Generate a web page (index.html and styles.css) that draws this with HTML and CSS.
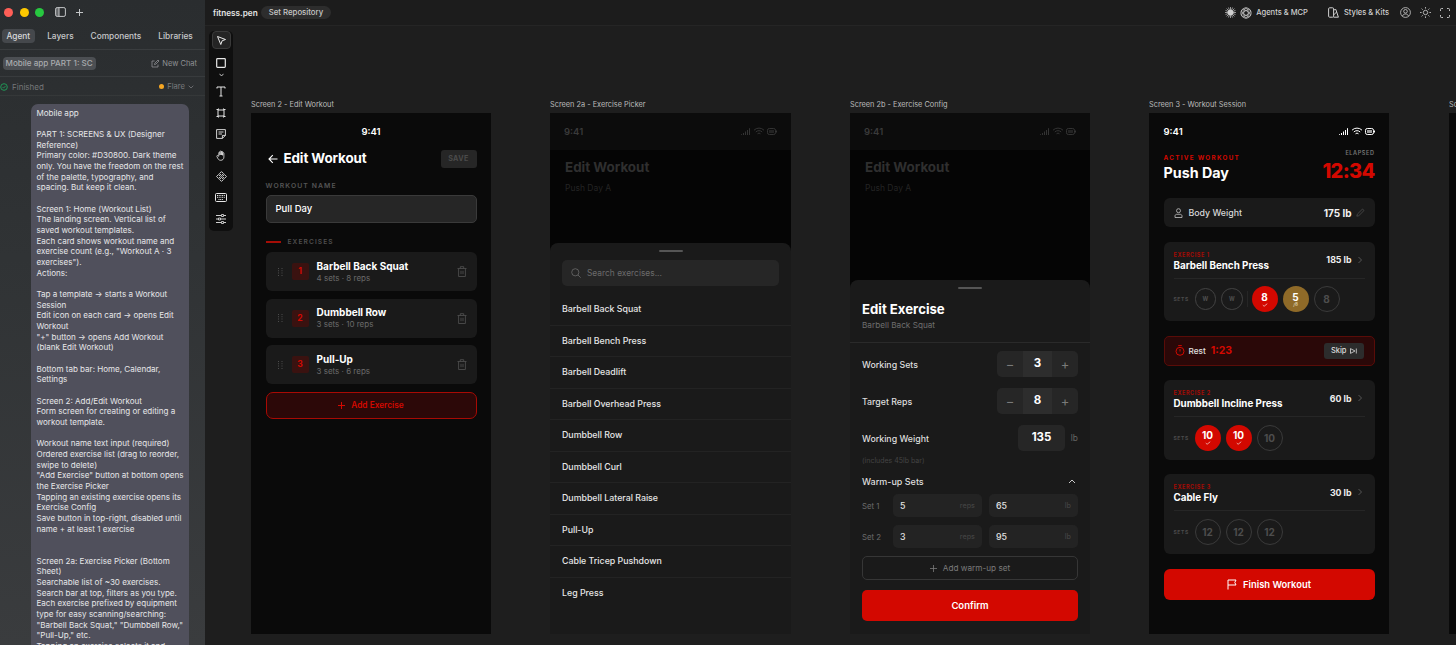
FILE: index.html
```html
<!DOCTYPE html>
<html lang="en">
<head>
<meta charset="utf-8">
<title>fitness.pen</title>
<link rel="stylesheet" href="styles.css">
</head>
<body>
<svg class="defs" width="0" height="0" aria-hidden="true">
  <symbol id="status" viewBox="0 0 36 9">
    <path d="M.5 8V7.200M2.500 8V6M4.500 8V4.500M6.500 8V3M8.500 8V1.200" fill="none" stroke="currentColor" stroke-width="1"/>
    <path d="M13 3.200a7 7 0 0 1 10 0M14.800 5a4.500 4.500 0 0 1 6.400 0M16.500 6.800a2.100 2.100 0 0 1 3 0" fill="none" stroke="currentColor" stroke-width="1"/>
    <rect x="26.500" y="1.500" width="8" height="6" rx="1.800" fill="none" stroke="currentColor"/>
    <rect x="28" y="3" width="5" height="3" fill="currentColor" opacity=".6"/>
    <rect x="35" y="3.500" width="1" height="2" fill="currentColor"/>
  </symbol>
  <symbol id="trash" viewBox="0 0 10 11">
    <path d="M.5 2.500h9M3.300 2.500V.7h3.400v1.800M1.600 2.500v8h6.800v-8M4 4.800v3.400M6 4.800v3.400" fill="none" stroke="currentColor" stroke-width=".9"/>
  </symbol>
  <symbol id="grip" viewBox="0 0 5 8">
    <path d="M0 0h1v1H0zM3.500 0h1v1h-1zM0 2.300h1v1H0zM3.500 2.300h1v1h-1zM0 4.600h1v1H0zM3.500 4.600h1v1h-1zM0 6.900h1v1H0zM3.500 6.900h1v1h-1z" fill="currentColor"/>
  </symbol>
  <symbol id="chev" viewBox="0 0 6 8">
    <path d="M1.500 1l3 3-3 3" fill="none" stroke="currentColor"/>
  </symbol>
  <symbol id="tick" viewBox="0 0 8 5">
    <path d="M1 2.600l1.800 1.600L7 .8" fill="none" stroke="currentColor" stroke-width=".8"/>
  </symbol>
</svg>

<aside class="sidebar">
  <div class="traffic">
    <span class="dot dot-red"></span><span class="dot dot-yellow"></span><span class="dot dot-green"></span>
    <svg class="panel-ico" width="11" height="10" viewBox="0 0 11 10"><rect x=".6" y=".6" width="9.800" height="8.800" rx="1.500" fill="none" stroke="currentColor"/><path d="M4 .6v8.800" stroke="currentColor"/><rect x="1" y="1" width="3" height="8" fill="currentColor" opacity=".4"/></svg>
    <svg class="plus-ico" width="9" height="9" viewBox="0 0 9 9"><path d="M4.500 1v7M1 4.500h7" stroke="currentColor"/></svg>
  </div>
  <nav class="tabs">
    <span class="tab tab-on">Agent</span><span class="tab">Layers</span><span class="tab">Components</span><span class="tab">Libraries</span>
  </nav>
  <div class="chat-row">
    <span class="chat-title">Mobile app PART 1: SC</span>
    <span class="new-chat">
      <svg width="9" height="9" viewBox="0 0 9 9"><path d="M7 5.500V8H1V2h2.600M3.500 5.600l.3-1.400L7 1l1 1-3.200 3.200z" fill="none" stroke="currentColor" stroke-width=".8"/></svg>
      New Chat
    </span>
  </div>
  <div class="status-row">
    <span class="finished">
      <svg width="8" height="8" viewBox="0 0 8 8"><circle cx="4" cy="4" r="3.300" fill="none" stroke="#1fa35a" stroke-width=".9"/><path d="M2.500 4l1.100 1.100 2-2.200" fill="none" stroke="#1fa35a" stroke-width=".8"/></svg>
      Finished
    </span>
    <span class="flare"><i class="flare-dot"></i>Flare
      <svg width="6" height="4" viewBox="0 0 6 4"><path d="M.7.700L3 3 5.300.700" fill="none" stroke="currentColor" stroke-width=".8"/></svg>
    </span>
  </div>
  <div class="thread">
    <p class="bubble">Mobile app

PART 1: SCREENS &amp; UX (Designer
Reference)
Primary color: #D30800. Dark theme
only. You have the freedom on the rest
of the palette, typography, and
spacing. But keep it clean.

Screen 1: Home (Workout List)
The landing screen. Vertical list of
saved workout templates.
Each card shows workout name and
exercise count (e.g., "Workout A · 3
exercises").
Actions:

Tap a template → starts a Workout
Session
Edit icon on each card → opens Edit
Workout
"+" button → opens Add Workout
(blank Edit Workout)

Bottom tab bar: Home, Calendar,
Settings

Screen 2: Add/Edit Workout
Form screen for creating or editing a
workout template.

Workout name text input (required)
Ordered exercise list (drag to reorder,
swipe to delete)
"Add Exercise" button at bottom opens
the Exercise Picker
Tapping an existing exercise opens its
Exercise Config
Save button in top-right, disabled until
name + at least 1 exercise


Screen 2a: Exercise Picker (Bottom
Sheet)
Searchable list of ~30 exercises.
Search bar at top, filters as you type.
Each exercise prefixed by equipment
type for easy scanning/searching:
"Barbell Back Squat," "Dumbbell Row,"
"Pull-Up," etc.
Tapping an exercise selects it and</p>
  </div>
</aside>

<div class="main">
  <header class="topbar">
    <span class="file">fitness.pen</span>
    <span class="repo">Set Repository</span>
    <span class="top-right">
      <svg class="t-ico" width="11" height="11" viewBox="0 0 11 11"><path d="M5.500 0v11M0 5.500h11M1.600 1.600l7.800 7.800M9.400 1.600L1.600 9.400M3.400.5l4.200 10M7.600.5l-4.200 10M.5 3.400l10 4.200M.5 7.600l10-4.200" stroke="currentColor" stroke-width=".7"/><circle cx="5.500" cy="5.500" r="2.800" fill="currentColor"/></svg>
      <svg class="t-ico" width="12" height="12" viewBox="0 0 12 12"><g fill="none" stroke="currentColor" stroke-width=".7"><circle cx="6" cy="6" r="5.200"/><ellipse cx="6" cy="6" rx="5" ry="2.200" transform="rotate(30 6 6)"/><ellipse cx="6" cy="6" rx="5" ry="2.200" transform="rotate(90 6 6)"/><ellipse cx="6" cy="6" rx="5" ry="2.200" transform="rotate(150 6 6)"/></g></svg>
      <span class="t-text t-agents">Agents &amp; MCP</span>
      <svg class="t-ico t-kits" width="11" height="11" viewBox="0 0 11 11"><g fill="none" stroke="currentColor"><rect x=".6" y=".8" width="5" height="9.400" rx="1"/><path d="M5.600 3l2.200-.6 2.600 7.800H5.600M5.600 8l3-3"/></g></svg>
      <span class="t-text t-styles">Styles &amp; Kits</span>
      <svg class="t-ico t-user" width="11" height="11" viewBox="0 0 11 11"><g fill="none" stroke="currentColor" stroke-width=".8"><circle cx="5.500" cy="5.500" r="4.900"/><circle cx="5.500" cy="4.300" r="1.800"/><path d="M2.400 9.200c.6-1.500 1.700-2.200 3.100-2.200s2.500.7 3.100 2.200"/></g></svg>
      <svg class="t-ico t-sun" width="11" height="11" viewBox="0 0 11 11"><g fill="none" stroke="currentColor" stroke-width=".8"><circle cx="5.500" cy="5.500" r="2.200"/><path d="M5.500 0v1.600M5.500 9.400V11M0 5.500h1.600M9.400 5.500H11M1.600 1.600l1.100 1.100M8.300 8.300l1.100 1.100M9.400 1.600L8.300 2.700M2.700 8.300L1.600 9.400"/></g></svg>
      <svg class="t-ico t-full" width="10" height="10" viewBox="0 0 10 10"><path d="M.5 3V1.500a1 1 0 0 1 1-1H3M7 .5h1.500a1 1 0 0 1 1 1V3M9.500 7v1.500a1 1 0 0 1-1 1H7M3 9.500H1.500a1 1 0 0 1-1-1V7" fill="none" stroke="currentColor" stroke-width=".9"/></svg>
    </span>
  </header>

  <main class="canvas">
    <div class="toolbar">
      <span class="tool tool-on"><svg width="11" height="11" viewBox="0 0 11 11"><path d="M1.500 1.500l8 3-3.400 1.300-1.300 3.700z" fill="none" stroke="currentColor"/></svg></span>
      <span class="tool"><svg width="10" height="10" viewBox="0 0 10 10"><rect x=".7" y=".7" width="8.600" height="8.600" rx=".8" fill="none" stroke="currentColor" stroke-width="1.200"/></svg></span>
      <span class="tool tool-chev"><svg width="5" height="4" viewBox="0 0 5 4"><path d="M.5.800L2.500 3 4.500.8" fill="none" stroke="currentColor" stroke-width=".8"/></svg></span>
      <span class="tool"><svg width="10" height="11" viewBox="0 0 10 11"><path d="M1 2.500V1h8v1.500M5 1v9M3.500 10h3" fill="none" stroke="currentColor"/></svg></span>
      <span class="tool"><svg width="10" height="10" viewBox="0 0 10 10"><path d="M2 2h6v6H2z" fill="none" stroke="currentColor"/><path d="M.5 1.500h2v-1M9.500 1.500h-2v-1M.5 8.500h2v1M9.500 8.500h-2v1" fill="none" stroke="currentColor"/></svg></span>
      <span class="tool"><svg width="10" height="10" viewBox="0 0 10 10"><path d="M.6.600h8.800v5.800L6.400 9.400H.6zM2.500 3h5M2.500 5h3.500M6.400 9.400V6.400h3" fill="none" stroke="currentColor" stroke-width=".9"/></svg></span>
      <span class="tool"><svg width="11" height="11" viewBox="0 0 11 11"><path d="M2.800 6.300V2.800c0-.9 1.200-.9 1.200 0V5 1.700c0-.9 1.300-.9 1.300 0V5 2c0-.9 1.300-.9 1.300 0v3.300-2c0-.9 1.300-.9 1.300 0v3.800c0 1.900-1.300 3.200-3.100 3.200-1.600 0-2.400-.8-3-1.900L.9 6.500c-.4-.9.700-1.400 1.200-.7z" fill="none" stroke="currentColor" stroke-width=".8"/></svg></span>
      <span class="tool"><svg width="11" height="11" viewBox="0 0 11 11"><path d="M5.500.6l2 2-2 2-2-2zM5.500 6.400l2 2-2 2-2-2zM2.600 3.500l2 2-2 2-2-2zM8.400 3.500l2 2-2 2-2-2z" fill="none" stroke="currentColor" stroke-width=".9"/></svg></span>
      <span class="tool"><svg width="12" height="9" viewBox="0 0 12 9"><rect x=".5" y=".5" width="11" height="8" rx="1" fill="none" stroke="currentColor"/><path d="M2 2.500h8M2 4.300h8M3.500 6.500h5" stroke="currentColor" stroke-dasharray="1 .7"/></svg></span>
      <span class="tool"><svg width="10" height="10" viewBox="0 0 10 10"><path d="M0 1.500h5M8 1.500h2M0 5h2M5 5h5M0 8.500h5M8 8.500h2" fill="none" stroke="currentColor" stroke-width=".9"/><path d="M5.500.5h2v2h-2zM2.500 4h2v2h-2zM5.500 7.500h2v2h-2z" fill="none" stroke="currentColor" stroke-width=".8"/></svg></span>
    </div>

    <!-- Screen 2 -->
    <section class="frame-wrap at-edit">
      <h2 class="frame-label">Screen 2 - Edit Workout</h2>
      <div class="frame edit">
        <div class="status-center">9:41</div>
        <div class="edit-head">
          <svg class="back" width="10" height="10" viewBox="0 0 10 10"><path d="M9.500 5H1M4.800 1.200L1 5l3.800 3.800" fill="none" stroke="#fff" stroke-width="1.100"/></svg>
          <h3 class="edit-title">Edit Workout</h3>
          <span class="save">SAVE</span>
        </div>
        <div class="field-label">WORKOUT NAME</div>
        <div class="name-input">Pull Day</div>
        <div class="section-label"><i class="section-rule"></i>EXERCISES</div>
        <div class="ex-list">
          <article class="ex-card">
            <svg class="grip"><use href="#grip"/></svg>
            <span class="ex-num">1</span>
            <div class="ex-info"><b class="ex-name">Barbell Back Squat</b><span class="ex-meta">4 sets · 8 reps</span></div>
            <svg class="trash"><use href="#trash"/></svg>
          </article>
          <article class="ex-card">
            <svg class="grip"><use href="#grip"/></svg>
            <span class="ex-num">2</span>
            <div class="ex-info"><b class="ex-name">Dumbbell Row</b><span class="ex-meta">3 sets · 10 reps</span></div>
            <svg class="trash"><use href="#trash"/></svg>
          </article>
          <article class="ex-card">
            <svg class="grip"><use href="#grip"/></svg>
            <span class="ex-num">3</span>
            <div class="ex-info"><b class="ex-name">Pull-Up</b><span class="ex-meta">3 sets · 6 reps</span></div>
            <svg class="trash"><use href="#trash"/></svg>
          </article>
        </div>
        <div class="add-ex"><svg width="7" height="7" viewBox="0 0 7 7"><path d="M3.500 0v7M0 3.500h7" stroke="currentColor"/></svg>Add Exercise</div>
      </div>
    </section>

    <!-- Screen 2a -->
    <section class="frame-wrap at-picker">
      <h2 class="frame-label">Screen 2a - Exercise Picker</h2>
      <div class="frame dimmed">
        <div class="dim-status"><span>9:41</span><svg class="st-ico"><use href="#status"/></svg></div>
        <div class="dim-body"><h3 class="dim-title">Edit Workout</h3><p class="dim-sub">Push Day A</p></div>
        <div class="sheet sheet-picker">
          <i class="handle"></i>
          <div class="search">
            <svg width="10" height="10" viewBox="0 0 10 10"><circle cx="4.300" cy="4.300" r="3.600" fill="none" stroke="currentColor" stroke-width=".8"/><path d="M7 7l2.700 2.700" stroke="currentColor" stroke-width=".8"/></svg>
            Search exercises...
          </div>
          <ul class="pick-list">
            <li class="pick">Barbell Back Squat</li>
            <li class="pick">Barbell Bench Press</li>
            <li class="pick">Barbell Deadlift</li>
            <li class="pick">Barbell Overhead Press</li>
            <li class="pick">Dumbbell Row</li>
            <li class="pick">Dumbbell Curl</li>
            <li class="pick">Dumbbell Lateral Raise</li>
            <li class="pick">Pull-Up</li>
            <li class="pick">Cable Tricep Pushdown</li>
            <li class="pick">Leg Press</li>
          </ul>
        </div>
      </div>
    </section>

    <!-- Screen 2b -->
    <section class="frame-wrap at-config">
      <h2 class="frame-label">Screen 2b - Exercise Config</h2>
      <div class="frame dimmed">
        <div class="dim-status"><span>9:41</span><svg class="st-ico"><use href="#status"/></svg></div>
        <div class="dim-body"><h3 class="dim-title">Edit Workout</h3><p class="dim-sub">Push Day A</p></div>
        <div class="sheet sheet-config">
          <i class="handle"></i>
          <div class="cfg-head"><h3 class="cfg-title">Edit Exercise</h3><p class="cfg-sub">Barbell Back Squat</p></div>
          <div class="cfg-body">
            <div class="cfg-row">
              <span class="cfg-label">Working Sets</span>
              <div class="stepper"><span class="step-btn">−</span><span class="step-val">3</span><span class="step-btn">+</span></div>
            </div>
            <div class="cfg-row">
              <span class="cfg-label">Target Reps</span>
              <div class="stepper"><span class="step-btn">−</span><span class="step-val">8</span><span class="step-btn">+</span></div>
            </div>
            <div class="cfg-row">
              <span class="cfg-label">Working Weight</span>
              <div class="weight"><span class="weight-val">135</span><span class="weight-unit">lb</span></div>
            </div>
            <p class="cfg-note">(includes 45lb bar)</p>
            <div class="warm-head"><span>Warm-up Sets</span><svg width="8" height="5" viewBox="0 0 8 5"><path d="M1 4l3-3 3 3" fill="none" stroke="currentColor" stroke-width=".9"/></svg></div>
            <div class="warm-row">
              <span class="warm-label">Set 1</span>
              <div class="warm-input"><span>5</span><em>reps</em></div>
              <div class="warm-input"><span>65</span><em>lb</em></div>
            </div>
            <div class="warm-row">
              <span class="warm-label">Set 2</span>
              <div class="warm-input"><span>3</span><em>reps</em></div>
              <div class="warm-input"><span>95</span><em>lb</em></div>
            </div>
            <div class="add-warm"><svg width="7" height="7" viewBox="0 0 7 7"><path d="M3.500 0v7M0 3.500h7" stroke="currentColor" stroke-width=".8"/></svg>Add warm-up set</div>
            <div class="confirm">Confirm</div>
          </div>
        </div>
      </div>
    </section>

    <!-- Screen 3 -->
    <section class="frame-wrap at-session">
      <h2 class="frame-label">Screen 3 - Workout Session</h2>
      <div class="frame session">
        <div class="sess-status"><span>9:41</span><svg class="st-ico"><use href="#status"/></svg></div>
        <div class="sess-head">
          <div class="sess-left"><span class="active-label">ACTIVE WORKOUT</span><h3 class="sess-title">Push Day</h3></div>
          <div class="sess-right"><span class="elapsed-label">ELAPSED</span><span class="elapsed">12:34</span></div>
        </div>
        <div class="body-weight">
          <svg width="9" height="10" viewBox="0 0 9 10"><g fill="none" stroke="currentColor" stroke-width=".8"><circle cx="4.500" cy="2.700" r="2"/><path d="M1 9.500V8c0-1 .8-1.700 1.700-1.700h3.600C7.200 6.300 8 7 8 8v1.500z"/></g></svg>
          <span class="bw-label">Body Weight</span>
          <b class="bw-val">175 lb</b>
          <svg class="bw-pen" width="9" height="9" viewBox="0 0 9 9"><path d="M.8 8.200l.5-2L6.500 1 8 2.500 2.800 7.700z" fill="none" stroke="currentColor" stroke-width=".7"/></svg>
        </div>
        <article class="s-card">
          <div class="s-top">
            <div class="s-names"><span class="s-kicker">EXERCISE 1</span><b class="s-name">Barbell Bench Press</b></div>
            <b class="s-weight">185 lb</b><svg class="s-chev"><use href="#chev"/></svg>
          </div>
          <div class="s-sets">
            <span class="sets-label">SETS</span>
            <span class="set set-w">W</span><span class="set set-w">W</span><i class="set-sep"></i>
            <span class="set set-done">8<svg class="tick"><use href="#tick"/></svg></span>
            <span class="set set-part">5<small>/8</small></span>
            <span class="set set-todo">8</span>
          </div>
        </article>
        <div class="rest">
          <svg class="rest-ico" width="10" height="11" viewBox="0 0 10 11"><g fill="none" stroke="currentColor"><circle cx="5" cy="6.300" r="4"/><path d="M3.200.6h3.600M5 4v2.500"/></g></svg>
          <span class="rest-label">Rest</span>
          <b class="rest-time">1:23</b>
          <span class="skip">Skip <svg width="7" height="6" viewBox="0 0 7 6"><path d="M.5.600L5 3 .5 5.400zM6.300.5v5" fill="none" stroke="currentColor" stroke-width=".8"/></svg></span>
        </div>
        <article class="s-card">
          <div class="s-top">
            <div class="s-names"><span class="s-kicker">EXERCISE 2</span><b class="s-name">Dumbbell Incline Press</b></div>
            <b class="s-weight">60 lb</b><svg class="s-chev"><use href="#chev"/></svg>
          </div>
          <div class="s-sets">
            <span class="sets-label">SETS</span>
            <span class="set set-done">10<svg class="tick"><use href="#tick"/></svg></span>
            <span class="set set-done">10<svg class="tick"><use href="#tick"/></svg></span>
            <span class="set set-todo">10</span>
          </div>
        </article>
        <article class="s-card">
          <div class="s-top">
            <div class="s-names"><span class="s-kicker">EXERCISE 3</span><b class="s-name">Cable Fly</b></div>
            <b class="s-weight">30 lb</b><svg class="s-chev"><use href="#chev"/></svg>
          </div>
          <div class="s-sets">
            <span class="sets-label">SETS</span>
            <span class="set set-todo">12</span><span class="set set-todo">12</span><span class="set set-todo">12</span>
          </div>
        </article>
        <div class="finish"><svg width="10" height="11" viewBox="0 0 10 11"><path d="M1 10.500V1h8L7.800 3.500 9 6H1" fill="none" stroke="currentColor"/></svg>Finish Workout</div>
      </div>
    </section>

    <section class="frame-wrap at-next">
      <h2 class="frame-label">Screen 4</h2>
      <div class="frame"></div>
    </section>
  </main>
</div>
</body>
</html>
```

FILE: styles.css
```css
* { box-sizing: border-box; margin: 0; padding: 0; }
html, body { height: 100%; }
body {
  display: flex;
  width: 1456px;
  height: 645px;
  overflow: hidden;
  background: #1e1e1e;
  color: #fff;
  font-family: Inter, "Liberation Sans", sans-serif;
}
.defs { position: absolute; }
h2, h3 { font-weight: inherit; font-size: inherit; }
ul { list-style: none; }
em { font-style: normal; }

/* sidebar */
.sidebar {
  width: 205px;
  flex: none;
  display: flex;
  flex-direction: column;
  background: linear-gradient(180deg, #2a2d2f 0%, #303335 40%, #3a3c3e 100%);
  color: #cfd0d2;
  overflow: hidden;
}
.traffic { height: 24px; display: flex; align-items: center; padding-left: 4px; flex: none; }
.dot { width: 9px; height: 9px; border-radius: 50%; margin-right: 6.500px; }
.dot-red { background: #ff5f57; }
.dot-yellow { background: #fdc800; }
.dot-green { background: #27c840; }
.panel-ico { color: #c4c6c8; margin-left: 4px; }
.plus-ico { color: #c4c6c8; margin-left: 9px; }
.tabs {
  height: 26px;
  flex: none;
  display: flex;
  align-items: flex-start;
  padding: 5px 0 0 2px;
  border-bottom: 1px solid #3a3d3f;
  font-size: 8.300px;
  font-weight: 500;
  color: #c8c9cb;
}
.tab { height: 14px; line-height: 14px; padding: 0 4.500px; margin-right: 8px; }
.tab-on { background: #45484c; border-radius: 4px; color: #d8d9db; }
.chat-row {
  height: 27px;
  flex: none;
  display: flex;
  align-items: center;
  justify-content: space-between;
  padding: 1px 8px 0 3px;
  border-bottom: 1px solid #383b3d;
}
.chat-title {
  width: 93px;
  height: 13px;
  line-height: 13px;
  padding-left: 2.500px;
  background: #4c4f53;
  border-radius: 4px;
  color: #a9abae;
  overflow: hidden;
  white-space: nowrap;
  font-size: 8.100px;
  font-weight: 500;
}
.new-chat { display: flex; align-items: center; gap: 2px; color: #8f9194; font-size: 7.500px; }
.status-row {
  height: 19px;
  flex: none;
  display: flex;
  align-items: center;
  justify-content: space-between;
  padding: 1px 11px 0 0;
  border-bottom: 1px solid #353839;
  font-size: 7.600px;
  color: #75787a;
}
.finished { display: flex; align-items: center; gap: 4px; font-size: 8px; }
.flare { display: flex; align-items: center; gap: 3px; color: #787a7d; }
.flare-dot { width: 5.500px; height: 5.500px; border-radius: 50%; background: #f5a623; }
.thread { padding: 8px 16px 0 31px; flex: 1; min-height: 0; }
.bubble {
  background: #50505c;
  border-radius: 7px;
  padding: 3.500px 5px 30px 5.500px;
  font-size: 8.050px;
  line-height: 10.667px;
  white-space: pre;
  color: #e6e6e8;
}

/* top bar */
.main { flex: 1; min-width: 0; display: flex; flex-direction: column; }
.topbar {
  height: 26px;
  flex: none;
  display: flex;
  align-items: center;
  padding: 0 6px 0 8px;
  background: #1c1c1c;
  border-bottom: 1px solid #252525;
  font-size: 8.200px;
  font-weight: 500;
  color: #dcdcdc;
}
.file { font-weight: 600; color: #e4e4e4; }
.repo {
  margin-left: 3px;
  padding: 0 8px;
  height: 13px;
  line-height: 13px;
  background: #2d2d2d;
  border-radius: 7px;
  color: #c8c8c8;
  font-size: 7.800px;
}
.top-right { margin-left: auto; display: flex; align-items: center; color: #d0d0d0; }
.t-ico { display: block; flex: none; margin-right: 4px; }
.t-text { font-size: 7.550px; }
.t-agents { margin-right: 20px; }
.t-kits { margin-right: 5px; }
.t-styles { margin-right: 11px; }
.t-user { margin-right: 9px; }
.t-sun { margin-right: 9px; }
.t-full { margin-right: 0; }

/* canvas */
.canvas { position: relative; flex: 1; background: #1e1e1e; overflow: hidden; }
.toolbar {
  position: absolute;
  left: 4px;
  top: 5px;
  width: 24px;
  height: 200px;
  display: flex;
  flex-direction: column;
  align-items: center;
  background: #0f0f0f;
  border-radius: 5px;
  color: #e8e8e8;
}
.tool { width: 19px; height: 21.200px; display: flex; align-items: center; justify-content: center; flex: none; }
.tool-on { height: 18px; margin-bottom: 3px; border: 1px solid #3a3a3a; border-radius: 4px; background: #242424; }
.tool-chev { height: 8px; margin-top: -2px; margin-bottom: 2px; }

.frame-wrap { position: absolute; top: 72px; width: 240px; }
.at-edit { left: 46px; }
.at-picker { left: 345px; width: 241px; }
.at-config { left: 645px; }
.at-session { left: 944px; }
.at-next { left: 1244px; }
.frame-label {
  height: 15px;
  line-height: 14px;
  font-size: 7.350px;
  color: #bcbcbc;
  white-space: nowrap;
  overflow: hidden;
}
.frame {
  height: 521px;
  position: relative;
  background: #0a0a0a;
  overflow: hidden;
  display: flex;
  flex-direction: column;
}

/* edit */
.edit { padding: 0 14.500px; }
.status-center { text-align: center; height: 37px; line-height: 37px; font-size: 9.500px; font-weight: 600; }
.edit-head { display: flex; align-items: center; height: 18px; }
.back { flex: none; margin-left: 2px; margin-right: 6px; }
.edit-title { font-size: 13.400px; line-height: 16px; padding-bottom: 2px; font-weight: 700; letter-spacing: -.1px; }
.save {
  margin-left: auto;
  width: 36px;
  height: 18px;
  line-height: 18px;
  text-align: center;
  background: #262626;
  border-radius: 3px;
  color: #4b4b4b;
  font-size: 7.200px;
  font-weight: 700;
  letter-spacing: .4px;
}
.field-label { margin-top: 13px; height: 14px; line-height: 10px; font-size: 6.800px; font-weight: 600; letter-spacing: 1.100px; color: #555; }
.name-input {
  height: 28px;
  line-height: 26px;
  padding-left: 9px;
  background: #262626;
  border: 1px solid #3a3a3a;
  border-radius: 5px;
  font-size: 9.500px;
  font-weight: 500;
}
.section-label {
  display: flex;
  align-items: center;
  gap: 7px;
  height: 29px;
  padding-top: 8px;
  font-size: 6.600px;
  font-weight: 600;
  letter-spacing: 1.100px;
  color: #4f4f4f;
}
.section-rule { width: 15px; height: 2px; background: #a50d06; flex: none; }
.ex-list { display: flex; flex-direction: column; gap: 7.500px; }
.ex-card {
  height: 39px;
  display: flex;
  align-items: center;
  padding: 0 10px 0 12px;
  background: #1a1a1a;
  border-radius: 6px;
}
.grip { width: 5px; height: 8px; color: #4d4d4d; flex: none; }
.ex-num {
  width: 17px;
  height: 17px;
  margin-left: 9px;
  line-height: 17px;
  text-align: center;
  background: #3a1210;
  border-radius: 2px;
  color: #d30800;
  font-size: 8.500px;
  font-weight: 700;
  flex: none;
}
.ex-info { margin-left: 8px; display: flex; flex-direction: column; flex: 1; }
.ex-name { font-size: 10px; line-height: 13px; font-weight: 700; }
.ex-meta { font-size: 8px; line-height: 11px; color: #6a6a6a; }
.trash { width: 10px; height: 11px; color: #4d4d4d; flex: none; }
.add-ex {
  margin-top: 7.500px;
  height: 27px;
  display: flex;
  align-items: center;
  justify-content: center;
  gap: 6px;
  background: #2c0808;
  border: 1px solid #a80a04;
  border-radius: 7px;
  color: #d30800;
  font-size: 8.300px;
  font-weight: 600;
}

/* dim frames */
.dimmed { background: #050505; }
.dim-status {
  height: 37px;
  flex: none;
  display: flex;
  align-items: center;
  justify-content: space-between;
  padding: 0 14px;
  background: #0c0c0c;
  color: #3a3a3a;
  font-size: 9.500px;
  font-weight: 600;
}
.st-ico { width: 36px; height: 9px; display: block; }
.dim-status .st-ico { color: #333; }
.dim-body { padding: 9px 15px 0; }
.dim-title { font-size: 13.400px; line-height: 17px; font-weight: 700; color: #2f2f2f; }
.dim-sub { margin-top: 7px; font-size: 8.500px; line-height: 11px; color: #242424; }
.sheet {
  position: absolute;
  left: 0;
  right: 0;
  bottom: 0;
  background: #1a1a1a;
  border-radius: 8px 8px 0 0;
  display: flex;
  flex-direction: column;
}
.handle { display: block; width: 24px; height: 2px; margin: 7px auto 0; background: #555; border-radius: 1px; flex: none; }
.sheet-picker { top: 130px; }
.search {
  margin: 8px 12px 0;
  height: 26px;
  display: flex;
  align-items: center;
  gap: 6px;
  padding-left: 9px;
  background: #262626;
  border-radius: 5px;
  color: #6b6b6b;
  font-size: 8.400px;
}
.pick-list { margin-top: 8px; }
.pick {
  height: 31.500px;
  line-height: 30px;
  padding-left: 12px;
  border-bottom: 1px solid #232323;
  font-size: 8.800px;
  font-weight: 500;
  color: #e6e6e6;
}
.pick:last-child { border-bottom: 0; }

/* config */
.sheet-config { top: 167px; }
.cfg-head { padding: 12px 12px 0; height: 54px; border-bottom: 1px solid #2a2a2a; flex: none; }
.cfg-title { font-size: 13.200px; line-height: 16px; font-weight: 700; }
.cfg-sub { margin-top: 2.500px; font-size: 8.200px; line-height: 11px; color: #6e6e6e; }
.cfg-body { padding: 8px 12px 0; }
.cfg-row { display: flex; align-items: center; justify-content: space-between; height: 26px; margin-bottom: 11px; }
.cfg-label { font-size: 8.800px; font-weight: 500; color: #dedede; }
.stepper { width: 81px; height: 26px; display: flex; background: #262626; border-radius: 5px; overflow: hidden; }
.step-btn { flex: 1; text-align: center; line-height: 26px; color: #7a7a7a; font-size: 13px; }
.step-val { width: 29px; text-align: center; line-height: 25px; background: #2d2d2d; font-size: 11.500px; font-weight: 700; }
.weight { display: flex; align-items: center; }
.weight-val { width: 47px; height: 26px; line-height: 25px; text-align: center; background: #262626; border-radius: 5px; font-size: 11.500px; font-weight: 700; }
.weight-unit { width: 13px; text-align: right; color: #666; font-size: 8.400px; }
.cfg-note { margin-top: -8px; height: 15px; line-height: 14px; font-size: 7px; color: #444; }
.warm-head { display: flex; align-items: center; justify-content: space-between; margin: 4px 0 4px; height: 17px; padding-right: 2px; font-size: 9px; font-weight: 500; color: #dedede; }
.warm-row { display: flex; align-items: center; height: 23px; margin-bottom: 8px; gap: 7px; }
.warm-label { width: 24px; font-size: 7.800px; color: #6a6a6a; }
.warm-input {
  flex: 1;
  height: 23px;
  display: flex;
  align-items: center;
  justify-content: space-between;
  padding: 0 7px;
  background: #232323;
  border-radius: 5px;
  font-size: 8.800px;
  font-weight: 500;
  color: #e2e2e2;
}
.warm-input em { font-size: 7.200px; color: #424242; }
.add-warm {
  height: 24px;
  display: flex;
  align-items: center;
  justify-content: center;
  gap: 6px;
  border: 1px solid #363636;
  border-radius: 5px;
  color: #7a7a7a;
  font-size: 8.200px;
}
.confirm {
  height: 31px;
  margin-top: 10px;
  line-height: 31px;
  text-align: center;
  background: #d30800;
  border-radius: 5px;
  font-size: 9.500px;
  font-weight: 600;
}

/* session */
.session { padding: 0 14.500px; }
.sess-status { height: 37px; flex: none; display: flex; align-items: center; justify-content: space-between; font-size: 9.500px; font-weight: 600; }
.sess-head { height: 31px; margin-top: 1px; display: flex; justify-content: space-between; }
.sess-left { display: flex; flex-direction: column; padding-top: 3px; }
.active-label { font-size: 6.300px; line-height: 9px; font-weight: 700; letter-spacing: 1.300px; color: #d30800; }
.sess-title { font-size: 14.300px; line-height: 18px; font-weight: 700; margin-top: 1px; }
.sess-right { display: flex; flex-direction: column; align-items: flex-end; margin-top: -2px; }
.elapsed-label { font-size: 5.500px; line-height: 8px; font-weight: 600; letter-spacing: .6px; color: #777; }
.elapsed { font-size: 20px; line-height: 23px; margin-top: 3px; font-weight: 800; color: #d30800; letter-spacing: -.7px; }
.body-weight {
  height: 29px;
  margin-top: 16px;
  display: flex;
  align-items: center;
  padding: 0 10px;
  background: #1a1a1a;
  border-radius: 6px;
  color: #c4c4c4;
  flex: none;
}
.bw-label { margin-left: 6px; flex: 1; font-size: 8.800px; font-weight: 500; color: #d8d8d8; }
.bw-val { font-size: 10px; font-weight: 700; color: #f2f2f2; }
.bw-pen { margin-left: 4px; color: #555; }
.s-card {
  height: 79.500px;
  margin-top: 14.500px;
  padding: 0 10px;
  background: #1a1a1a;
  border-radius: 6px;
  flex: none;
}
.s-top { height: 37px; display: flex; align-items: center; border-bottom: 1px solid #262626; padding-top: 4px; }
.s-names { flex: 1; display: flex; flex-direction: column; }
.s-kicker { font-size: 5.500px; line-height: 7px; font-weight: 700; letter-spacing: .55px; color: #a30b05; }
.s-name { font-size: 9.800px; line-height: 13px; font-weight: 700; }
.s-weight { font-size: 8.800px; font-weight: 700; color: #ededed; margin-bottom: 4px; }
.s-chev { width: 6px; height: 8px; margin: 0 2px 4px 5px; color: #555; }
.s-sets { height: 41px; display: flex; align-items: center; gap: 5px; }
.sets-label { width: 16px; font-size: 5px; font-weight: 700; letter-spacing: .6px; color: #4b4b4b; }
.set {
  width: 26px;
  height: 26px;
  border-radius: 50%;
  display: flex;
  flex-direction: column;
  align-items: center;
  justify-content: center;
  font-size: 10px;
  font-weight: 700;
  line-height: 10px;
  flex: none;
}
.set-w { width: 21.500px; height: 21.500px; border: 1px solid #434343; color: #4f4f4f; font-size: 5.500px; }
.set-sep { width: 1px; height: 16px; margin: 0 -1px; background: #262626; flex: none; }
.set-done { background: #d30800; color: #fff; }
.set-part { background: #8f6a28; color: #fff; }
.set-part small { font-size: 4.500px; line-height: 5px; color: #d8c8a0; }
.set-todo { border: 1px solid #3a3a3a; color: #4d4d4d; }
.tick { width: 6px; height: 4px; margin-top: 1px; color: #fff; }
.rest {
  height: 30px;
  margin-top: 14.500px;
  display: flex;
  align-items: center;
  padding: 0 10px;
  background: #2a0808;
  border: 1px solid #5a0c08;
  border-radius: 5px;
  flex: none;
}
.rest-ico { color: #d30800; }
.rest-label { margin-left: 4px; font-size: 8.200px; font-weight: 500; color: #e0e0e0; }
.rest-time { margin-left: 5px; font-size: 10.500px; font-weight: 700; color: #d30800; }
.skip {
  margin-left: auto;
  height: 16px;
  padding: 0 7px;
  display: flex;
  align-items: center;
  gap: 3px;
  background: #2c2c2c;
  border-radius: 3px;
  color: #dcdcdc;
  font-size: 7.500px;
  font-weight: 500;
}
.finish {
  height: 31px;
  margin-top: 15.500px;
  display: flex;
  align-items: center;
  justify-content: center;
  gap: 6px;
  background: #d30800;
  border-radius: 6px;
  font-size: 9.400px;
  font-weight: 600;
  flex: none;
}
```
